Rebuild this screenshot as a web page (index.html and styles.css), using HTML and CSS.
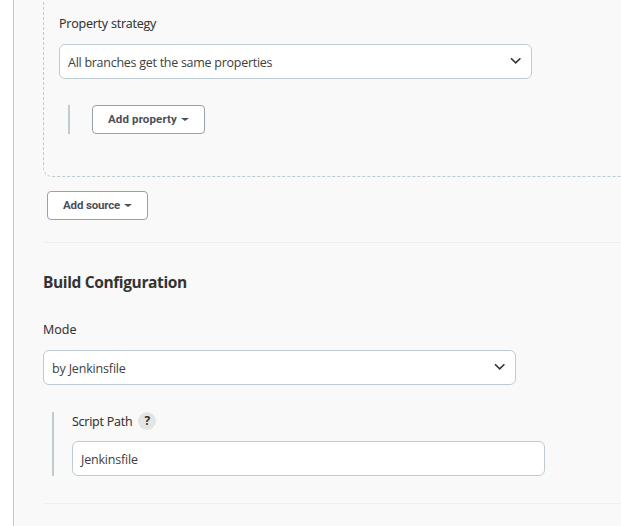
FILE: index.html
```html
<!DOCTYPE html>
<html lang="en">
<head>
<meta charset="utf-8">
<title>Build Configuration</title>
<link rel="stylesheet" href="styles.css">
</head>
<body>
<main class="panel">
  <section class="source">
    <div class="label strategy-label"><span>Property strategy</span></div>
    <div class="control"><span class="strategy-value">All branches get the same properties</span>
      <svg class="chevron" viewBox="0 0 12 8"><path d="M1 1.2 5.7 5.9l4.7-4.7"/></svg></div>
    <div class="properties">
      <button class="button property-button"><span>Add property</span><i class="caret"></i></button>
    </div>
  </section>
  <button class="button source-button"><span>Add source</span><i class="caret"></i></button>
  <section class="config">
    <h2><span>Build Configuration</span></h2>
    <div class="label mode-label"><span>Mode</span></div>
    <div class="control"><span class="mode-value">by Jenkinsfile</span>
      <svg class="chevron" viewBox="0 0 12 8"><path d="M1 1.2 5.7 5.9l4.7-4.7"/></svg></div>
    <div class="script">
      <div class="label script-label"><span>Script Path</span><b class="help">?</b></div>
      <div class="control"><span class="path-value">Jenkinsfile</span></div>
    </div>
  </section>
</main>
</body>
</html>
```
FILE: styles.css
```css
* { box-sizing: border-box; }
body {
  margin: 0;
  background: #fff;
  color: #333;
  font-family: "Open Sans", "Noto Sans", sans-serif;
  overflow: hidden;
}
.panel {
  display: flow-root;
  height: 526px;
  margin-left: 13px;
  padding-left: 29px;
  border-left: 1px solid #bfcbcd;
  background: #f9f9f9;
}
.source {
  height: 187px;
  margin-top: -10px;
  margin-right: -20px;
  padding: 23px 0 0 15px;
  border: 1px dashed #bccbd2;
  border-top: 0;
  border-radius: 0 0 0 9px;
}
.label {
  display: flex;
  align-items: center;
  height: 20px;
  font-size: 12.5px;
  font-weight: 500;
  -webkit-text-stroke: 0.1px #333;
  white-space: nowrap;
}
.strategy-label { margin-bottom: 11px; letter-spacing: -0.22px; }
.control {
  display: flex;
  align-items: center;
  justify-content: space-between;
  width: 473px;
  height: 35px;
  padding: 2px 9px 0 8px;
  border: 1px solid #bdccd3;
  border-radius: 6px;
  background: #fff;
  color: #404040;
  font-size: 12.5px;
  white-space: nowrap;
}
.strategy-value { letter-spacing: -0.27px; }
.mode-value { letter-spacing: -0.17px; }
.path-value { letter-spacing: -0.2px; }
.chevron {
  width: 12px;
  height: 8px;
  margin-top: -3px;
  fill: none;
  stroke: #333;
  stroke-width: 1.6;
}
.properties {
  display: flex;
  height: 29px;
  margin: 26px 0 0 9px;
  padding-left: 22px;
  border-left: 2px solid #bfccd2;
}
.button {
  display: flex;
  align-items: center;
  height: 29px;
  padding: 0 15px 1px;
  border: 1px solid #93a3b2;
  border-radius: 4px;
  background: #fff;
  color: #4a5059;
  font: 700 11.5px Roboto, sans-serif;
  white-space: nowrap;
}
.button span { margin-top: -1px; }
.property-button { width: 113px; letter-spacing: 0.13px; }
.source-button { width: 101px; margin: 14px 0 0 4px; letter-spacing: -0.15px; }
.caret {
  margin: 1px 0 0 4px;
  border: 4px solid transparent;
  border-top: 3px solid #4a5059;
  border-bottom: 0;
}
.config {
  height: 262px;
  margin-top: 22px;
  border-top: 1px solid #efefef;
  border-bottom: 1px solid #efefef;
}
h2 {
  margin: 28px 0 0;
  font-size: 15.5px;
  line-height: 22px;
  font-weight: 700;
  letter-spacing: -0.37px;
  white-space: nowrap;
}
.mode-label { margin: 26px 0 11px; }
.script {
  height: 64px;
  margin: 27px 0 0 9px;
  padding-left: 18px;
  border-left: 2px solid #bfccd2;
}
.script-label { height: 19px; margin-bottom: 10px; letter-spacing: -0.25px; }
.help {
  width: 18px;
  height: 18px;
  margin: -1px 0 0 6px;
  border-radius: 50%;
  background: #e5e5e5;
  font-size: 12px;
  line-height: 18px;
  text-align: center;
  -webkit-text-stroke: 0;
}
```
